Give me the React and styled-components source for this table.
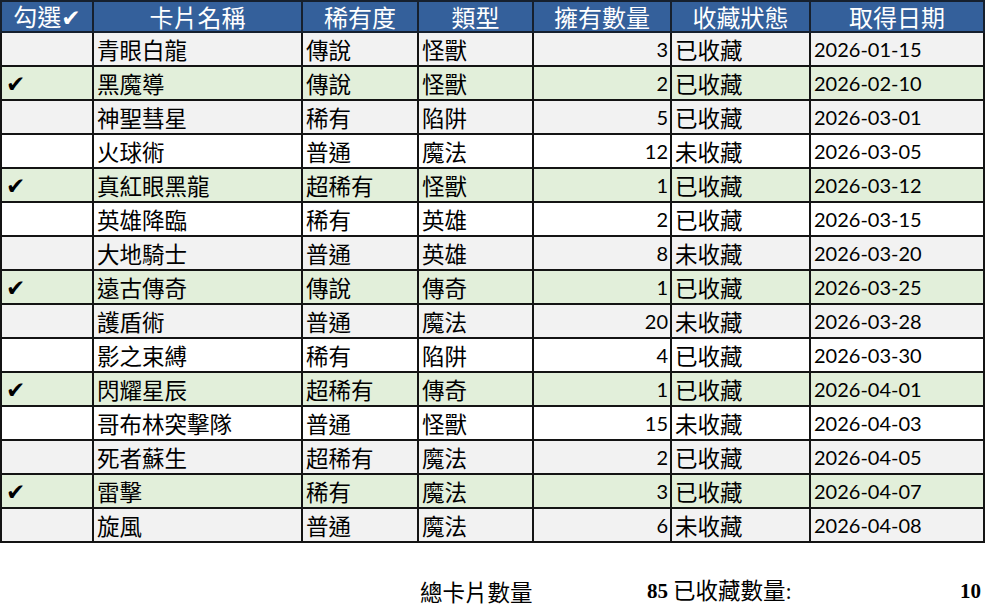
import React from 'react';
import styled, { createGlobalStyle } from 'styled-components';

const GlobalStyle = createGlobalStyle`
  html, body { margin: 0; padding: 0; background: #ffffff; }
  body { font-family: "Lato", "Noto Sans CJK TC", sans-serif; }
`;

const cols = [92, 209, 116, 115, 138, 139, 174];

const cards = [
  { checked: false, name: '青眼白龍', rarity: '傳說', type: '怪獸', qty: 3, status: '已收藏', date: '2026-01-15' },
  { checked: true, name: '黑魔導', rarity: '傳說', type: '怪獸', qty: 2, status: '已收藏', date: '2026-02-10' },
  { checked: false, name: '神聖彗星', rarity: '稀有', type: '陷阱', qty: 5, status: '已收藏', date: '2026-03-01' },
  { checked: false, name: '火球術', rarity: '普通', type: '魔法', qty: 12, status: '未收藏', date: '2026-03-05' },
  { checked: true, name: '真紅眼黑龍', rarity: '超稀有', type: '怪獸', qty: 1, status: '已收藏', date: '2026-03-12' },
  { checked: false, name: '英雄降臨', rarity: '稀有', type: '英雄', qty: 2, status: '已收藏', date: '2026-03-15' },
  { checked: false, name: '大地騎士', rarity: '普通', type: '英雄', qty: 8, status: '未收藏', date: '2026-03-20' },
  { checked: true, name: '遠古傳奇', rarity: '傳說', type: '傳奇', qty: 1, status: '已收藏', date: '2026-03-25' },
  { checked: false, name: '護盾術', rarity: '普通', type: '魔法', qty: 20, status: '未收藏', date: '2026-03-28' },
  { checked: false, name: '影之束縛', rarity: '稀有', type: '陷阱', qty: 4, status: '已收藏', date: '2026-03-30' },
  { checked: true, name: '閃耀星辰', rarity: '超稀有', type: '傳奇', qty: 1, status: '已收藏', date: '2026-04-01' },
  { checked: false, name: '哥布林突擊隊', rarity: '普通', type: '怪獸', qty: 15, status: '未收藏', date: '2026-04-03' },
  { checked: false, name: '死者蘇生', rarity: '超稀有', type: '魔法', qty: 2, status: '已收藏', date: '2026-04-05' },
  { checked: true, name: '雷擊', rarity: '稀有', type: '魔法', qty: 3, status: '已收藏', date: '2026-04-07' },
  { checked: false, name: '旋風', rarity: '普通', type: '魔法', qty: 6, status: '未收藏', date: '2026-04-08' },
];

const headers = ['勾選', '卡片名稱', '稀有度', '類型', '擁有數量', '收藏狀態', '取得日期'];

const Sheet = styled.table`
  border-collapse: collapse;
  table-layout: fixed;
  width: 985px;
`;

const HeadCell = styled.th`
  height: 29px;
  padding: 0;
  background: #34609b;
  color: #ffffff;
  border: 2px solid #16202e;
  font-family: "Noto Sans CJK TC", sans-serif;
  font-weight: 400;
  font-size: 24px;
  line-height: 24px;
  text-align: center;
  white-space: nowrap;
`;

const Row = styled.tr`
  height: 34px;
  background: ${p => (p.$checked ? '#e2efda' : p.$band ? '#f2f2f2' : '#ffffff')};
`;

const Cell = styled.td`
  padding: 0 2px 0 3px;
  border: 2px solid #141414;
  color: #000000;
  font-family: ${p => (p.$latin ? '"Lato", sans-serif' : '"Noto Sans CJK TC", sans-serif')};
  font-size: ${p => (p.$latin ? '20px' : '22.5px')};
  line-height: 28px;
  text-align: ${p => (p.$right ? 'right' : 'left')};
  white-space: nowrap;
`;

const Tick = styled.span`
  font-family: "DejaVu Sans", sans-serif;
  font-size: 23px;
  padding-left: ${p => (p.$head ? '0' : '1px')};
`;

const Summary = styled.div`
  display: grid;
  grid-template-columns: ${cols.map(c => c + 'px').join(' ')};
  margin-top: 31px;
  height: 30px;
  align-items: center;
`;

const SumLabel = styled.div`
  grid-column: ${p => p.$col};
  padding-left: 3px;
  font-family: "Noto Sans CJK TC", sans-serif;
  font-size: 22.5px;
  line-height: 30px;
  white-space: nowrap;
`;

const SumValue = styled.div`
  grid-column: ${p => p.$col};
  text-align: right;
  padding-right: 2px;
  font-family: "Liberation Serif", serif;
  font-weight: 700;
  font-size: 21px;
  line-height: 30px;
`;

const Colon = styled.span`
  font-family: "Liberation Serif", serif;
`;

export default function App() {
  return (
    <>
      <GlobalStyle />
      <Sheet>
        <colgroup>
          {cols.map((w, i) => <col key={i} style={{ width: w }} />)}
        </colgroup>
        <thead>
          <tr>
            {headers.map((h, i) => (
              <HeadCell key={h}>
                {h}
                {i === 0 && <Tick $head>✔</Tick>}
              </HeadCell>
            ))}
          </tr>
        </thead>
        <tbody>
          {cards.map((c, i) => (
            <Row key={c.name} $checked={c.checked} $band={i % 2 === 0}>
              <Cell>{c.checked && <Tick>✔</Tick>}</Cell>
              <Cell>{c.name}</Cell>
              <Cell>{c.rarity}</Cell>
              <Cell>{c.type}</Cell>
              <Cell $latin $right>{c.qty}</Cell>
              <Cell>{c.status}</Cell>
              <Cell $latin>{c.date}</Cell>
            </Row>
          ))}
        </tbody>
      </Sheet>
      <Summary>
        <SumLabel $col={4}>總卡片數量</SumLabel>
        <SumValue $col={5}>85</SumValue>
        <SumLabel $col={6}>已收藏數量<Colon>:</Colon></SumLabel>
        <SumValue $col={7}>10</SumValue>
      </Summary>
    </>
  );
}
